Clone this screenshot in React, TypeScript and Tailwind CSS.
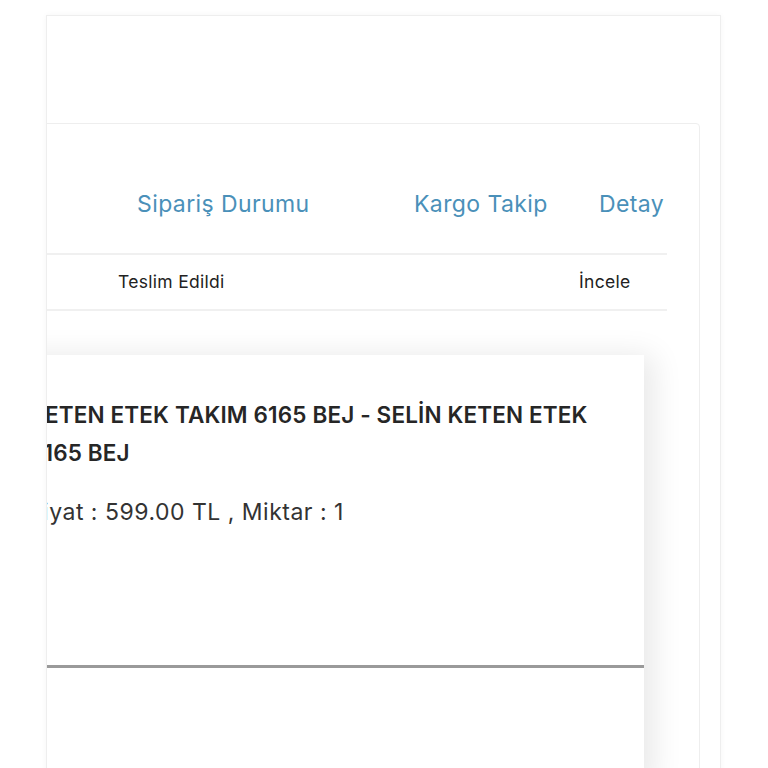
import React from "react";

const font = { fontFamily: "Inter, 'Noto Sans', sans-serif" };

export default function App() {
  return (
    <div className="min-h-[768px] w-[768px] overflow-hidden bg-white pt-[15px]" style={font}>
      {/* outer panel, scrolled so its left part is out of view */}
      <div className="ml-[46px] h-[760px] w-[675px] overflow-hidden border border-[#eeeeee] shadow-[0_0_6px_rgba(0,0,0,0.04)]">
        <div className="-ml-[120px] pr-[20px] pt-[107px]">
          <div className="rounded-[4px] border border-[#eeeeee] pt-[40px]">
            {/* orders table */}
            <div className="pl-[20px] pr-[32px]">
              <div className="grid grid-cols-[170px_277px_184px_88px] border-b-2 border-[#f0f0f0] pt-[24px] pb-[32px] text-[23px] leading-[33px] tracking-[0.4px] text-[#4a90b9]">
                <div />
                <div className="pl-[19px] whitespace-nowrap">Sipariş Durumu</div>
                <div className="pl-[19px] whitespace-nowrap">Kargo Takip</div>
                <div className="pl-[20px] whitespace-nowrap">Detay</div>
              </div>
              <div className="grid h-[56px] grid-cols-[170px_277px_184px_88px] items-center border-b-2 border-[#f0f0f0] text-[17.5px] tracking-[0.3px] text-[#222222]">
                <div />
                <div className="whitespace-nowrap">Teslim Edildi</div>
                <div />
                <div className="whitespace-nowrap">İncele</div>
              </div>
            </div>

            {/* product card */}
            <div className="mt-[44px] ml-[76px] mr-[55px] bg-white shadow-[10px_0_28px_rgba(0,0,0,0.09)]">
              <div className="pl-[25px] pr-[40px] pt-[41px] pb-[136px]">
                <p className="text-[22.5px] font-semibold leading-[38px] tracking-[0.15px] text-[#262626]">
                  KETEN ETEK TAKIM 6165 BEJ - SELİN KETEN ETEK 6165 BEJ
                </p>
                <p className="mt-[24px] text-[23px] leading-[33px] tracking-[0.5px] text-[#333333]">
                  Fiyat : 599.00 TL , Miktar : 1
                </p>
              </div>
              <div className="h-[3px] bg-[#9a9a9a]" />
              <div className="h-[120px]" />
            </div>
          </div>
        </div>
      </div>
    </div>
  );
}
